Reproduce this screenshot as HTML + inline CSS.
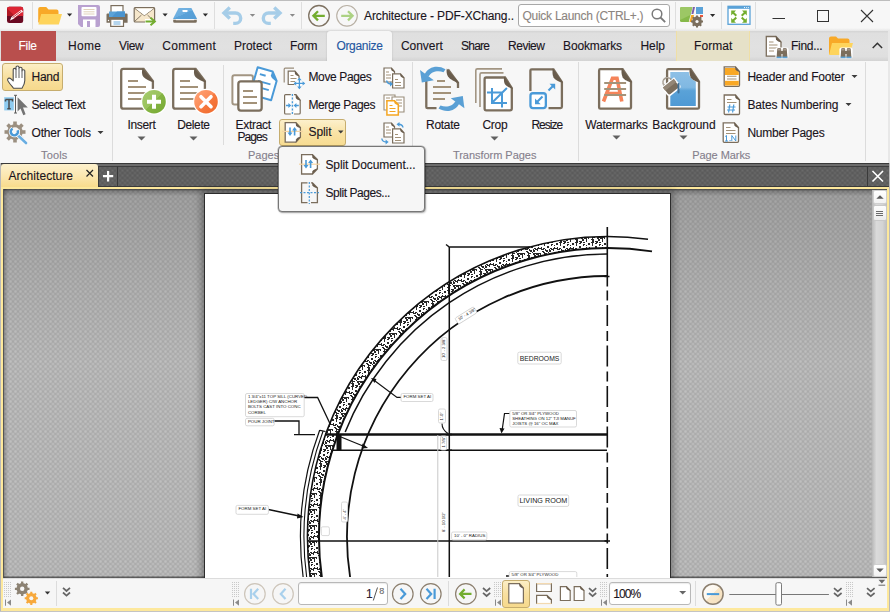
<!DOCTYPE html>
<html><head><meta charset="utf-8">
<style>
*{margin:0;padding:0;box-sizing:border-box}
html,body{width:890px;height:612px;overflow:hidden;background:#f7f7f7;font-family:"Liberation Sans",sans-serif;color:#1a1420}
.a{position:absolute}
.t{position:absolute;white-space:nowrap;-webkit-text-stroke:0.12px currentColor}
svg.L{position:absolute;left:0;top:0;width:890px;height:612px;overflow:visible}
.tex{background-color:#a5a5a5;background-image:radial-gradient(circle at 50% 50%,#bfbfbf 0,#bdbdbd 0.8px,rgba(189,189,189,0) 2.3px),radial-gradient(circle at 50% 50%,#bfbfbf 0,#bdbdbd 0.8px,rgba(189,189,189,0) 2.3px);background-size:5px 5px;background-position:0 0,2.5px 2.5px}
.texd{background-color:#5a5a5a;background-image:radial-gradient(circle at 50% 50%,#6a6a6a 0,rgba(106,106,106,0) 2.2px),radial-gradient(circle at 50% 50%,#6a6a6a 0,rgba(106,106,106,0) 2.2px);background-size:5px 5px;background-position:0 0,2.5px 2.5px}
</style></head><body>
<div class="a" style="left:0;top:0;width:890px;height:31px;background:#f7f7f7;border-top:1px solid #bdbdbd"></div>
<div class="a" style="left:0;top:28px;width:890px;height:3px;background:linear-gradient(#f7f7f7,#e6e6e6)"></div>
<div class="a" style="left:0;top:31px;width:890px;height:30px;background:linear-gradient(#d4d4d4,#dfdfdf 8%,#e1e1e1 50%,#dfdfdf 85%,#d3d3d3)"></div>
<div class="a" style="left:1px;top:31px;width:55px;height:30px;background:#b94f4d"></div>
<div class="a" style="left:327px;top:31px;width:65px;height:31px;background:#f6f6f6;border-radius:3px 3px 0 0;box-shadow:0 0 2px rgba(0,0,0,.18)"></div>
<div class="a" style="left:676px;top:31px;width:74px;height:30px;background:#e6e1c8;border-left:1px solid #efdfa6;border-right:1px solid #efdfa6"></div>
<div class="a" style="left:0;top:61px;width:890px;height:102px;background:#f7f7f7"></div>
<div class="a" style="left:112px;top:62px;width:1px;height:99px;background:#dcdcdc"></div>
<div class="a" style="left:223px;top:65px;width:1px;height:80px;background:#dcdcdc"></div>
<div class="a" style="left:412px;top:62px;width:1px;height:99px;background:#dcdcdc"></div>
<div class="a" style="left:578px;top:62px;width:1px;height:99px;background:#dcdcdc"></div>
<div class="a" style="left:865px;top:62px;width:1px;height:99px;background:#dcdcdc"></div>
<div class="a" style="left:888px;top:31px;width:2px;height:132px;background:#e8e8e8"></div>
<div class="a" style="left:2px;top:63px;width:61px;height:28px;border:1px solid #c6ad6e;border-radius:3px;background:linear-gradient(#fcefc6,#f8e0a0 50%,#f6d98c)"></div>
<div class="a" style="left:279px;top:119px;width:67px;height:27px;border:1px solid #c6ad6e;border-radius:3px;background:linear-gradient(#fcf0cc,#f9e3a6 50%,#f7dc92)"></div>
<!-- tab bar -->
<div class="a texd" style="left:0;top:163px;width:890px;height:24px"></div>
<div class="a" style="left:0;top:163px;width:890px;height:1px;background:#3a3a3a"></div>
<div class="a" style="left:0;top:164px;width:890px;height:2px;background:#6c6c6c"></div>
<div class="a" style="left:0;top:166px;width:890px;height:1px;background:#3e3e3e"></div>
<div class="a" style="left:98px;top:166px;width:1px;height:20px;background:#3a3a3a"></div>
<div class="a" style="left:117px;top:166px;width:1px;height:20px;background:#3a3a3a"></div>
<div class="a" style="left:867px;top:166px;width:1px;height:20px;background:#3a3a3a"></div>
<div class="a" style="left:0;top:186px;width:890px;height:1px;background:#3a3a3a"></div>
<div class="a" style="left:1px;top:164px;width:97px;height:23px;border-radius:3px 3px 0 0;background:linear-gradient(#fdf1cd,#fbe6ae 55%,#f9dc8c)"></div>
<!-- frame -->
<div class="a" style="left:0;top:187px;width:890px;height:425px;background:#fde89c"></div>
<div class="a" style="left:0;top:163px;width:1px;height:449px;background:#b9b9b9"></div>
<div class="a" style="left:889px;top:163px;width:1px;height:449px;background:#b9b9b9"></div>
<div class="a" style="left:0;top:611px;width:890px;height:1px;background:#c4c4c4"></div>
<div class="a tex" style="left:3px;top:189px;width:884px;height:389px"></div>
<div class="a" style="left:3px;top:189px;width:884px;height:389px;background:linear-gradient(rgba(0,0,0,.15),rgba(0,0,0,.06) 25%,rgba(0,0,0,0) 45%)"></div><div class="a" style="left:3px;top:189px;width:884px;height:7px;background:linear-gradient(rgba(0,0,0,.55),rgba(0,0,0,.2) 30%,rgba(0,0,0,0))"></div><div class="a" style="left:3px;top:189px;width:5px;height:389px;background:linear-gradient(90deg,rgba(0,0,0,.3),rgba(0,0,0,0))"></div><div class="a" style="left:3px;top:576px;width:884px;height:2px;background:linear-gradient(rgba(0,0,0,.15),rgba(0,0,0,.6))"></div>
<div class="a" style="left:3px;top:189px;width:1px;height:389px;background:#555"></div>
<!-- page shadow + page -->
<div class="a" style="left:204px;top:193px;width:467px;height:390px;background:#fff;border:1px solid #2c2c2c;box-shadow:0 0 7px 3px rgba(0,0,0,.3)"></div>
<!-- scrollbar -->
<div class="a" style="left:872px;top:190px;width:15px;height:387px;background:linear-gradient(90deg,#b8b8b8,#dadada 30%,#d4d4d4 70%,#bdbdbd)"></div>
<div class="a" style="left:873px;top:190px;width:14px;height:14px;background:linear-gradient(#fff,#f2f2f2);border:1px solid #d0d0d0;border-radius:2px"></div>
<div class="a" style="left:873px;top:205px;width:14px;height:16px;background:linear-gradient(#fdfdfd,#ececec);border:1px solid #c8c8c8;border-radius:2px"></div>
<div class="a" style="left:873px;top:564px;width:14px;height:13px;background:linear-gradient(#fff,#f2f2f2);border:1px solid #d0d0d0;border-radius:2px"></div>
<!-- status bar -->
<div class="a" style="left:3px;top:578px;width:884px;height:30px;background:#f6f6f6;border-top:1px solid #dcdcdc"></div>
<div class="a" style="left:298px;top:582px;width:90px;height:23px;border:1px solid #b8b8b8;border-radius:3px;background:#fff;box-shadow:inset 0 1px 1px rgba(0,0,0,.08)"></div>
<div class="a" style="left:609px;top:582px;width:82px;height:23px;border:1px solid #b8b8b8;border-radius:3px;background:#fff;box-shadow:inset 0 1px 1px rgba(0,0,0,.08)"></div>
<div class="a" style="left:502px;top:580px;width:28px;height:28px;border:1px solid #c6ad6e;border-radius:3px;background:linear-gradient(#fcefc6,#f8e0a0 50%,#f6d98c)"></div>
<div class="a" style="left:56px;top:581px;width:1px;height:25px;background:#dcdcdc"></div>
<div class="a" style="left:448px;top:581px;width:1px;height:25px;background:#dcdcdc"></div>
<div class="a" style="left:695px;top:581px;width:1px;height:25px;background:#dcdcdc"></div>
<!-- quick launch -->
<div class="a" style="left:518px;top:4px;width:152px;height:23px;border:1px solid #a8a8a8;border-radius:3px;background:#fff"></div>
<div class="a" style="left:32px;top:2px;width:1px;height:27px;background:#dedede"></div>
<div class="a" style="left:214px;top:2px;width:1px;height:27px;background:#dedede"></div>
<div class="a" style="left:301px;top:2px;width:1px;height:27px;background:#dedede"></div>
<div class="a" style="left:675px;top:2px;width:1px;height:27px;background:#dedede"></div>
<div class="a" style="left:721px;top:2px;width:1px;height:27px;background:#dedede"></div>
<div class="a" style="left:755px;top:2px;width:1px;height:27px;background:#dedede"></div>
<svg class="L">
<defs>
<linearGradient id="gG" x1="0" y1="0" x2="1" y2="1"><stop offset="0" stop-color="#a6cc6e"/><stop offset=".5" stop-color="#9ac25c"/><stop offset=".5" stop-color="#86b544"/><stop offset="1" stop-color="#76a934"/></linearGradient>
<linearGradient id="gO" x1="0" y1="0" x2="1" y2="1"><stop offset="0" stop-color="#ffa477"/><stop offset=".5" stop-color="#fb8a56"/><stop offset=".5" stop-color="#f77a40"/><stop offset="1" stop-color="#ef6a2c"/></linearGradient>
<linearGradient id="gB" x1="0" y1="0" x2="0" y2="1"><stop offset="0" stop-color="#8dc0e6"/><stop offset=".45" stop-color="#80b8e2"/><stop offset=".55" stop-color="#5aa2d8"/><stop offset="1" stop-color="#4f9ad4"/></linearGradient>
</defs>
<g stroke-linecap="butt">
<!-- Insert -->
<path d="M123.4,68.9H143.6L152.9,81.2V106.5Q152.9,108.7 150.7,108.7H123.4Q121.2,108.7 121.2,106.5V71.1Q121.2,68.9 123.4,68.9Z" fill="#fff" stroke="#7b6e5d" stroke-width="2.3"/>
<path d="M142.6,68.2L154,82.2C150,81.5 146,79.5 143.5,77C141.6,75 141.6,71 142.6,68.2Z" fill="#695c4c"/>
<path d="M128,81H138M128,87H146M128,93H146M128,99H146" stroke="#a39279" stroke-width="1.9"/>
<circle cx="154" cy="101.7" r="13" fill="#fff"/>
<circle cx="154" cy="101.7" r="11.8" fill="url(#gG)"/>
<path d="M147,101.7H161M154,94.7V108.7" stroke="#fff" stroke-width="4"/>
<!-- Delete -->
<path d="M175.4,68.9H195.6L204.9,81.2V106.5Q204.9,108.7 202.7,108.7H175.4Q173.2,108.7 173.2,106.5V71.1Q173.2,68.9 175.4,68.9Z" fill="#fff" stroke="#7b6e5d" stroke-width="2.3"/>
<path d="M194.6,68.2L206,82.2C202,81.5 198,79.5 195.5,77C193.6,75 193.6,71 194.6,68.2Z" fill="#695c4c"/>
<path d="M180,81H190M180,87H198M180,93H198M180,99H198" stroke="#a39279" stroke-width="1.9"/>
<circle cx="206" cy="101.7" r="13" fill="#fff"/>
<circle cx="206" cy="101.7" r="11.8" fill="url(#gO)"/>
<path d="M201,96.7L211,106.7M211,96.7L201,106.7" stroke="#fff" stroke-width="3.6" stroke-linecap="round"/>
<!-- Extract Pages -->
<rect x="232.4" y="75.3" width="20.5" height="29.2" rx="2" fill="#fff" stroke="#a29582" stroke-width="2"/>
<g transform="translate(257,66) rotate(16)">
<path d="M1,1H16.5L23,9V29H1Z" fill="#fff" stroke="#4a9ad8" stroke-width="2" stroke-linejoin="round"/>
<path d="M16,0.5L23.5,9.5C20.5,9 17,7.5 16,5.5Z" fill="#4a9ad8"/>
<path d="M5,7H11M5,14H18M5,20H18" stroke="#4a9ad8" stroke-width="1.9"/>
</g>
<rect x="238.35" y="81.45" width="23.3" height="29.1" rx="2.5" fill="#fff" stroke="#7b6e5d" stroke-width="2.3"/>
<path d="M243,91H253M243,97H257M243,103H257" stroke="#a39279" stroke-width="1.9"/>
<!-- Move Pages -->
<path d="M284.2,82.5V69.2Q284.2,68.2 285.2,68.2H294" fill="none" stroke="#9a8d7b" stroke-width="1.2"/>
<path d="M288.2,71.2H295L299,76V84.5H288.2Z" fill="#fff" stroke="#7b6e5d" stroke-width="1.2"/>
<path d="M294.6,70.6L299.6,76.4C297.5,76 295.5,75 295,74Z" fill="#695c4c"/>
<path d="M290.5,75.5H293.5M290.5,78.5H296.5M290.5,81.5H295" stroke="#a39279" stroke-width="1.2"/>
<g stroke="#fff" stroke-width="3" fill="none"><path d="M294.4,83.4H304.4M299.4,78.4V88.4"/></g>
<g stroke="#4a9ad8" stroke-width="1.3" fill="none"><path d="M294.4,83.4H304.4M299.4,78.4V88.4"/></g>
<path d="M299.4,77.6L297.2,80.2H301.6ZM299.4,89.2L297.2,86.6H301.6ZM293.6,83.4L296.2,81.2V85.6ZM305.2,83.4L302.6,81.2V85.6Z" fill="#4a9ad8"/>
<!-- Merge Pages -->
<path d="M290.8,94.6H285.6Q284.6,94.6 284.6,95.6V113Q284.6,114 285.6,114H290.8M294,94.6H296L300.2,100.2V113Q300.2,114 299.2,114H294" fill="#fff" stroke="#7b6e5d" stroke-width="1.2"/>
<path d="M295.4,94L301,100.8C298.5,100.3 296.5,99.3 295.8,98Z" fill="#695c4c"/>
<path d="M292.4,94V115" stroke="#4a9ad8" stroke-width="1.3" stroke-dasharray="2,1.6"/>
<path d="M286,105.5H289.5M298.8,105.5H295.3" stroke="#4a9ad8" stroke-width="1.3"/>
<path d="M291.2,105.5L288.4,103V108ZM293.6,105.5L296.4,103V108Z" fill="#4a9ad8"/>
<!-- Split (button) -->
<path d="M285.2,122.6H296L300.4,127.6V137.2L296,142.2H285.2Z" fill="#fff" stroke="#7b6e5d" stroke-width="1.3"/>
<path d="M295.6,122L301,128.2C298.8,127.8 296.6,126.6 296,125.4Z" fill="#695c4c"/>
<path d="M295.6,142.8L301,136.6C298.8,137 296.6,138.2 296,139.4Z" fill="#695c4c"/>
<path d="M282,131.4H303" stroke="#f4d4a4" stroke-width="1.2"/>
<path d="M290,127.5V133.5M294.6,129.5V135.5" stroke="#4a9ad8" stroke-width="1.6"/>
<path d="M290,136L287.5,132.6H292.5ZM294.6,127L292.1,130.4H297.1Z" fill="#4a9ad8"/>
<!-- right column 1 -->
<path d="M384,68H391.5L394.5,71.5V82H384Z" fill="#fff" stroke="#7b6e5d" stroke-width="1.2"/>
<path d="M391,67.5L395,72C393.5,71.8 391.8,71 391.3,70Z" fill="#695c4c"/>
<path d="M386,72H389M386,75H391M386,78H391" stroke="#a39279" stroke-width="1.1"/>
<path d="M392.6,73.8H400.5L404,77.8V88H392.6Z" fill="#fff" stroke="#7b6e5d" stroke-width="1.2"/>
<path d="M400,73.2L404.6,78.3C402.8,78 401,77 400.4,76Z" fill="#695c4c"/>
<path d="M395,79.5H398M395,82.5H401M395,85.5H401" stroke="#a39279" stroke-width="1.1"/>
<path d="M386.5,80.5Q387.5,84 391,84" fill="none" stroke="#4a9ad8" stroke-width="1.4"/>
<path d="M393,84L390,81.6V86.4Z" fill="#4a9ad8"/>
<!-- right column 2 -->
<path d="M384,95H395V110H384Z" fill="#fff" stroke="#9a8d7b" stroke-width="1.1"/>
<path d="M386,98H390M386,101H393" stroke="#a39279" stroke-width="1"/>
<path d="M392,97H404V112H392Z" fill="#fff" stroke="#9a8d7b" stroke-width="1.1"/>
<path d="M396,100H402M396,103H402M396,106H402" stroke="#a39279" stroke-width="1"/>
<path d="M386.9,100.7H394.5L398.3,104.5V114.9H386.9Z" fill="#fff" stroke="#f5a623" stroke-width="1.5"/>
<path d="M394,100.2L399,105.2C397,105 395,104 394.4,103Z" fill="#f5a623"/>
<path d="M389.5,105.5H392.5M389.5,108.5H395.5M389.5,111.5H395.5" stroke="#f5a623" stroke-width="1.2"/>
<!-- right column 3 -->
<path d="M384,123H391.5L394.5,126.5V137H384Z" fill="#fff" stroke="#7b6e5d" stroke-width="1.2"/>
<path d="M391,122.5L395,127C393.5,126.8 391.8,126 391.3,125Z" fill="#695c4c"/>
<path d="M386,127H389M386,130H391M386,133H391" stroke="#a39279" stroke-width="1.1"/>
<path d="M392.6,128.8H400.5L404,132.8V143H392.6Z" fill="#fff" stroke="#7b6e5d" stroke-width="1.2"/>
<path d="M400,128.2L404.6,133.3C402.8,133 401,132 400.4,131Z" fill="#695c4c"/>
<path d="M395,134.5H398M395,137.5H401M395,140.5H401" stroke="#a39279" stroke-width="1.1"/>
<path d="M403,127.5Q402.5,124.3 398.5,124.3" fill="none" stroke="#4a9ad8" stroke-width="1.4"/>
<path d="M396.5,124.3L399.5,121.9V126.7Z" fill="#4a9ad8"/>
<path d="M381.8,138.5Q382.2,142 386.5,142" fill="none" stroke="#4a9ad8" stroke-width="1.4"/>
<path d="M388.6,142L385.6,139.6V144.4Z" fill="#4a9ad8"/>
<!-- Rotate -->
<path d="M426.3,80V107Q426.3,108.2 427.5,108.2H436.5M458,88V83L448,69.5" fill="none" stroke="#7b6e5d" stroke-width="2.3"/>
<path d="M446.8,68.4L459.2,82.8C455,82 450,79.5 448,76.5C446.5,74 446.3,71 446.8,68.4Z" fill="#695c4c"/>
<path d="M437,81H445M433,87H451M433,93H451M433,99H445" stroke="#a39279" stroke-width="1.9"/>
<path d="M445.5,69.2C438,64.8 428.5,66.2 424.5,74.5L428.8,76.5C431,71.5 438,70 443.5,72.2Z" fill="#5aa0d5"/>
<path d="M420,70L421.8,82.4L433.8,80.2Z" fill="#5aa0d5"/>
<path d="M438.5,108.6C446,113 455.5,111.6 459.5,103.3L455.2,101.3C453,106.3 446,107.8 440.5,105.6Z" fill="#5aa0d5"/>
<path d="M464.4,108.3L462.8,96L450.8,98.2Z" fill="#5aa0d5"/>
<!-- Crop -->
<path d="M475.8,103V70.5Q475.8,68.9 477.4,68.9H502" fill="none" stroke="#a29582" stroke-width="1.6"/>
<path d="M480,107V74.5Q480,72.9 481.6,72.9H503.5" fill="none" stroke="#a29582" stroke-width="1.6"/>
<path d="M486.2,77.5H505L511.8,88V108.6Q511.8,110.3 510,110.3H486.2Q484.6,110.3 484.6,108.6V79.2Q484.6,77.5 486.2,77.5Z" fill="#fff" stroke="#7b6e5d" stroke-width="2.3"/>
<path d="M504.2,76.6L513,89C509.5,88 506,86 504.8,84C503.8,82 503.7,79 504.2,76.6Z" fill="#695c4c"/>
<path d="M492,88V103H507M487,92.6H502V107.5M492,102.7L506.9,88" fill="none" stroke="#4a9ad8" stroke-width="2"/>
<!-- Resize -->
<path d="M530.4,91V70.6Q530.4,69.3 531.7,69.3H553.5L561.9,82V106.8Q561.9,108.1 560.6,108.1H548.5" fill="none" stroke="#7b6e5d" stroke-width="2.3"/>
<path d="M552.8,68.3L563,82.8C559,82 555,80 553.5,77.5C552.3,75 552.3,71 552.8,68.3Z" fill="#695c4c"/>
<rect x="530.45" y="93.25" width="15.4" height="14.8" rx="2.5" fill="#fff" stroke="#4a9ad8" stroke-width="2.3"/>
<path d="M542.5,96.5L537,102" stroke="#4a9ad8" stroke-width="2.2"/>
<path d="M535,104.2V98.5L540.7,104.2Z" fill="#4a9ad8"/>
<path d="M548.5,90.5L553,86" stroke="#4a9ad8" stroke-width="2.2"/>
<path d="M555.2,83.8V89.5L549.5,83.8Z" fill="#4a9ad8"/>
<!-- Watermarks -->
<path d="M600.4,69.2H622.6L631,81.7V107.4Q631,108.7 629.7,108.7H600.4Q599.1,108.7 599.1,107.4V70.5Q599.1,69.2 600.4,69.2Z" fill="#fff" stroke="#7b6e5d" stroke-width="2.3"/>
<path d="M621.8,68.3L632.2,82.6C628,81.8 624,79.8 622.6,77.2C621.3,74.7 621.3,71 621.8,68.3Z" fill="#695c4c"/>
<path d="M603.5,101.5L612.5,78.2H617L621.8,101.5M607,93.5H619" fill="none" stroke="#f5845a" stroke-width="3.6"/>
<path d="M604.2,83H626.1M604.2,89H626.1M604.2,95H626.1" stroke="#a39279" stroke-width="1.9"/>
<!-- Background -->
<path d="M668.4,69.2H690.6L699,81.7V107.4Q699,108.7 697.7,108.7H668.4Q667.1,108.7 667.1,107.4V70.5Q667.1,69.2 668.4,69.2Z" fill="#fff" stroke="#7b6e5d" stroke-width="2.3"/>
<path d="M670.3,72.1H688.8C689,76 691.5,79.5 695.8,81.6V105.9H670.3Z" fill="url(#gB)"/>
<path d="M689.8,68.3L700.2,82.6C696,81.8 692,79.8 690.6,77.2C689.3,74.7 689.3,71 689.8,68.3Z" fill="#695c4c"/>
<g transform="translate(670.5,86) rotate(-38)">
<path d="M-7.5,-4H7.5V4.5Q7.5,7 5,7H-5Q-7.5,7 -7.5,4.5Z" fill="#7b6e5d" stroke="#fff" stroke-width="1.5"/>
<path d="M-7,-3.6H7V0.5H-7Z" fill="#938676"/>
<path d="M-4.5,-4.5C-4.5,-11 4.5,-11 4.5,-4.5" fill="none" stroke="#7b6e5d" stroke-width="1.4"/>
<path d="M-4.5,-4.5C-4.5,-11 4.5,-11 4.5,-4.5" fill="none" stroke="#fff" stroke-width="0.5"/>
</g>
<path d="M678.5,84V92.5" stroke="#3f6f95" stroke-width="2" stroke-linecap="round"/>
</g>
</svg>
<svg class="L">
<g stroke-linecap="butt">
<!-- carets (ribbon) -->
<path d="M137.5,136.5H145.5L141.5,140.5Z M189.5,136.5H197.5L193.5,140.5Z M490.5,136.5H498.5L494.5,140.5Z M612.5,135.5H620.5L616.5,139.5Z M679.5,135.5H687.5L683.5,139.5Z" fill="#606060"/>
<path d="M338,130.5H343.5L340.75,133.5Z M97.5,131H103.5L100.5,134Z M851.5,75H857.5L854.5,78Z M845.5,103H851.5L848.5,106Z" fill="#3c3c3c"/>
<!-- Header and Footer -->
<path d="M724.2,66.8H735.5L739.5,71.5V85.3Q739.5,86.3 738.5,86.3H725.2Q724.2,86.3 724.2,85.3Z" fill="#fff" stroke="#7b6e5d" stroke-width="1.3"/>
<path d="M725,68H735.2L738.8,72.2V75H725Z" fill="#f9a825"/>
<path d="M725,80.8H738.8V85.5H725Z" fill="#f9a825"/>
<path d="M735,66.2L740.2,72.2C738,71.8 736,70.8 735.4,69.6Z" fill="#695c4c"/>
<path d="M727,76.2H736.5M727,79H736.5" stroke="#a39279" stroke-width="1.1"/>
<!-- Bates -->
<path d="M724.2,95H735.5L739.5,99.7V113.5Q739.5,114.5 738.5,114.5H725.2Q724.2,114.5 724.2,113.5Z" fill="#fff" stroke="#7b6e5d" stroke-width="1.3"/>
<path d="M735,94.4L740.2,100.4C738,100 736,99 735.4,97.8Z" fill="#695c4c"/>
<path d="M727,99.5H731.5M727,102.5H736.5" stroke="#a39279" stroke-width="1.1"/>
<path d="M729.8,104.5L728.6,112.5M733.8,104.5L732.6,112.5M727.5,107H735.5M727,110H735" stroke="#4a9ad8" stroke-width="1.2"/>
<!-- Number Pages -->
<path d="M723.2,122.8H734.5L738.5,127.5V141.3Q738.5,142.3 737.5,142.3H724.2Q723.2,142.3 723.2,141.3Z" fill="#fff" stroke="#7b6e5d" stroke-width="1.3"/>
<path d="M734,122.2L739.2,128.2C737,127.8 735,126.8 734.4,125.6Z" fill="#695c4c"/>
<path d="M726,127.5H730.5M726,130.5H735.5M726,133.5H735.5" stroke="#a39279" stroke-width="1.1"/>
<path d="M725.2,136.5L726.5,135.5V141M725,141H728M729.5,140.5H730.6M731.8,141V135.5L735.8,141V135.5" fill="none" stroke="#4a9ad8" stroke-width="1"/>
<!-- Hand -->
<path d="M12.3,86.6C10,84 7.5,81 7.6,79.6C7.8,78 9.6,77.6 11,78.8L13.2,80.8V69.5C13.2,68 16,68 16,69.5V67.3C16,65.6 19,65.6 19,67.3V68.3C19,66.8 22,66.8 22,68.3V70.8C22,69.3 24.8,69.3 24.8,70.8V80.5C24.8,84 23.5,86 22,88.3H13.5Z" fill="#fff" stroke="#4d4d4d" stroke-width="1.1" stroke-linejoin="round"/>
<path d="M16,69.5V78M19,68.3V78M22,70.8V78" stroke="#4d4d4d" stroke-width="0.9"/>
<!-- Select Text -->
<rect x="4.2" y="97.2" width="9.6" height="13.2" fill="#8ecbf0"/>
<path d="M5.5,99.5H12.5V101.5M5.5,101.5V99.5M9,99.5V108.8M7.3,108.8H10.7" fill="none" stroke="#4c4c4c" stroke-width="1.5"/>
<path d="M15.5,95.3V113M14,95.3H17M14,113H17" stroke="#5c5c5c" stroke-width="1"/>
<path d="M17.6,97.2V111.5L20.5,108.6L23.3,115.2L25.6,114.2L23,107.6H27.8Z" fill="#737373"/>
<!-- Other tools gear+wrench -->
<g transform="translate(15,132)">
<circle r="6.2" fill="none" stroke="#9b8f80" stroke-width="3"/>
<g fill="#9b8f80"><rect x="-1.8" y="-10.5" width="3.6" height="4"/><rect x="-1.8" y="6.5" width="3.6" height="4"/><rect x="-10.5" y="-1.8" width="4" height="3.6"/><rect x="6.5" y="-1.8" width="4" height="3.6"/>
<rect x="-1.8" y="-10.5" width="3.6" height="4" transform="rotate(45)"/><rect x="-1.8" y="6.5" width="3.6" height="4" transform="rotate(45)"/><rect x="-10.5" y="-1.8" width="4" height="3.6" transform="rotate(45)"/><rect x="6.5" y="-1.8" width="4" height="3.6" transform="rotate(45)"/></g>
</g>
<path d="M16.5,134L26,143" stroke="#fff" stroke-width="4"/>
<path d="M16.5,134L26,143" stroke="#6aaee2" stroke-width="2.6" stroke-linecap="round"/>
<path d="M12.6,128.6A3.6,3.6 0 1 0 17.6,130.2" fill="none" stroke="#fff" stroke-width="4"/>
<path d="M12.6,128.6A3.6,3.6 0 1 0 17.6,130.2" fill="none" stroke="#4a9ad8" stroke-width="2.5"/>
</g>
</svg>
<svg class="L">
<defs>
<linearGradient id="gScan" x1="0" y1="0" x2="1" y2="1"><stop offset="0" stop-color="#79b6e3"/><stop offset=".5" stop-color="#6aaddf"/><stop offset=".5" stop-color="#5aa2d8"/><stop offset="1" stop-color="#559dd5"/></linearGradient>
</defs>
<g stroke-linecap="butt">
<!-- app icon -->
<rect x="7" y="6.8" width="16.2" height="16.2" rx="2.2" fill="#6b0a22"/>
<path d="M9.2,6.8H21Q23.2,6.8 23.2,9V16H7V9Q7,6.8 9.2,6.8Z" fill="#dc2433"/>
<path d="M7,8.5L15,16H7Z" fill="#b01824"/>
<path d="M10,20.5L11.5,17L21.5,9.8L23,11.8L13.2,19Z" fill="#fff"/>
<path d="M12.5,17.5L21.2,11.3M14,18.5L22,12.7" stroke="#c41e2e" stroke-width="0.9"/>
<!-- folder -->
<path d="M38.2,9Q38.2,7 40.2,7H46.2L48.5,9.4H56.5Q58.5,9.4 58.5,11.4V22.5H38.2Z" fill="#f8a928"/>
<path d="M41.2,14H62L58.8,24.6H38.4Z" fill="#fed45c"/>
<path d="M67,13.5H72.2L69.6,16.6Z" fill="#2a2a2a"/>
<!-- save -->
<path d="M78,5H98Q100,5 100,7V25Q100,27 98,27H81L78,24Z" fill="#b9a1d0"/>
<rect x="81.5" y="7" width="15" height="9.2" rx="1" fill="#fff"/>
<path d="M83.5,9.5H94.5M83.5,11.8H94.5M83.5,14H94.5" stroke="#d9c7aa" stroke-width="0.8"/>
<rect x="83" y="19.5" width="12.5" height="7.5" fill="#fff"/>
<rect x="87" y="21" width="3" height="6" fill="#b9a1d0"/>
<!-- print -->
<rect x="111" y="5.6" width="12" height="7" fill="#fff" stroke="#7b6e5d" stroke-width="1.2"/>
<path d="M107.5,13.5Q106.5,13.5 106.5,14.5V22.8H110V19.5H124V22.8H127.6V14.5Q127.6,13.5 126.6,13.5Z" fill="#7b6e5d"/>
<path d="M109,11.5H125V17H109Z" fill="#5aa2d8"/>
<path d="M117,11.5H125V17H112Z" fill="#4a94cf"/>
<rect x="110.7" y="19.2" width="12.8" height="7.2" fill="#fff" stroke="#7b6e5d" stroke-width="1.2"/>
<path d="M113.5,22H120.5M113.5,24H120.5" stroke="#5aa2d8" stroke-width="0.9"/>
<circle cx="108.5" cy="20.5" r="0.7" fill="#fff"/>
<!-- mail -->
<rect x="134.2" y="7.6" width="20.4" height="14.4" rx="1" fill="#f6e7cb" stroke="#7b6e5d" stroke-width="1.2"/>
<path d="M134.5,8.2L144.4,15.6L154.3,8.2M134.5,21.5L141.5,15M154.3,21.5L147.5,15" fill="none" stroke="#7b6e5d" stroke-width="0.9"/>
<path d="M135.5,8.5H153.5L144.4,15.2Z" fill="#fff"/>
<path d="M145,21.5H152.5" stroke="#fff" stroke-width="5"/>
<path d="M145.5,21.5H153" stroke="#73ad2f" stroke-width="2"/>
<path d="M150.5,17.8L154.8,21.5L150.5,25.2" fill="none" stroke="#73ad2f" stroke-width="2"/>
<path d="M162.5,13.5H167.7L165.1,16.6Z" fill="#2a2a2a"/>
<!-- scanner -->
<path d="M178.6,8.1H191.4L197.1,18.9H172.9Z" fill="url(#gScan)"/>
<rect x="182.3" y="10" width="5.4" height="1.9" rx="0.8" fill="#fff"/>
<path d="M174.5,19.8V21.5H195.5V19.8" fill="none" stroke="#7b6e5d" stroke-width="2.6" stroke-linejoin="round"/>
<path d="M202.8,13.5H208L205.4,16.6Z" fill="#2a2a2a"/>
<!-- undo -->
<path d="M225,13H235.5A5.2,5.2 0 0 1 235.5,23.4H233.2" fill="none" stroke="#a6cde8" stroke-width="3.4"/>
<path d="M229.8,7.6L224,13L229.8,18.4" fill="none" stroke="#a6cde8" stroke-width="3.4"/>
<path d="M249.8,14H255.2L252.5,16.8Z" fill="#8a8a8a"/>
<!-- redo -->
<path d="M279,13H268.5A5.2,5.2 0 0 0 268.5,23.4H270.8" fill="none" stroke="#a6cde8" stroke-width="3.4"/>
<path d="M274.2,7.6L280,13L274.2,18.4" fill="none" stroke="#a6cde8" stroke-width="3.4"/>
<path d="M289.8,14H295L292.4,16.8Z" fill="#8a8a8a"/>
<!-- back/forward -->
<circle cx="319" cy="15.8" r="10.3" fill="#f7f7f7" stroke="#7e7262" stroke-width="1.3"/>
<path d="M313.5,15.8H324.8M318,11.2L313.4,15.8L318,20.4" fill="none" stroke="#73ad2f" stroke-width="2.3"/>
<circle cx="347" cy="15.8" r="10.3" fill="#f7f7f7" stroke="#b8b0a4" stroke-width="1.1"/>
<path d="M341.2,15.8H352.5M348,11.2L352.6,15.8L348,20.4" fill="none" stroke="#acd283" stroke-width="2.3"/>
<!-- search -->
<circle cx="657" cy="14" r="4.8" fill="none" stroke="#7a7a7a" stroke-width="1.5"/>
<path d="M660.5,17.5L665.2,22.2" stroke="#7a7a7a" stroke-width="1.8"/>
<!-- theme -->
<path d="M681.5,7H692.4L688.8,22H681.5Q680,22 680,20.5V8.5Q680,7 681.5,7Z" fill="#86b94a"/>
<path d="M681.5,7H692.4L690.5,15L680,20V8.5Q680,7 681.5,7Z" fill="#9cc765"/>
<path d="M693,7H695L693.4,14H691.4Z" fill="#7c5ea8"/>
<path d="M691.2,15H694L692.3,22H689.5Z" fill="#f5a623"/>
<rect x="696" y="7" width="7" height="7" fill="#5aa2d8"/>
<rect x="700" y="15" width="3" height="2" fill="#e8553a"/>
<g transform="translate(697,21.5)">
<circle r="5.2" fill="#f7f7f7"/><circle r="3.6" fill="none" stroke="#7b6e5d" stroke-width="2.6"/>
<path d="M0,-6V6M-6,0H6M-4.2,-4.2L4.2,4.2M4.2,-4.2L-4.2,4.2" stroke="#7b6e5d" stroke-width="2"/>
<circle r="1.6" fill="#f7f7f7"/>
</g>
<path d="M710,14H715.2L712.6,17Z" fill="#2a2a2a"/>
<!-- fullscreen -->
<rect x="728" y="6.3" width="22" height="18" fill="#fff" stroke="#5aa2d8" stroke-width="1.3"/>
<rect x="728" y="6.3" width="22" height="2.5" fill="#5aa2d8"/>
<path d="M744,7.5H745M746.2,7.5H747.2M748.2,7.5H749" stroke="#fff" stroke-width="0.9"/>
<g stroke="#73ad2f" stroke-width="2" fill="none">
<path d="M733,12.5L736.3,15.8M745,12.5L741.7,15.8M733,20.8L736.3,17.5M745,20.8L741.7,17.5"/>
</g>
<path d="M731.2,10.6H736L731.2,15.4ZM746.8,10.6H742L746.8,15.4ZM731.2,22.7H736L731.2,17.9ZM746.8,22.7H742L746.8,17.9Z" fill="#73ad2f"/>
<!-- window controls -->
<path d="M772.5,18.5H785" stroke="#333" stroke-width="1"/>
<rect x="817.5" y="10.5" width="11" height="11" fill="none" stroke="#333" stroke-width="1"/>
<path d="M861,10L873,22M873,10L861,22" stroke="#333" stroke-width="1.1"/>
<!-- find doc + binocular -->
<path d="M766.3,36.5H776L781,42V56.2H766.3Z" fill="#fff" stroke="#7b6e5d" stroke-width="1.3"/>
<path d="M775.5,35.8L781.8,42.6C779,42 777,41 776,39.5Z" fill="#695c4c"/>
<path d="M769,42H773.5M769,45H777.5M769,48H777.5M769,51H774" stroke="#a39279" stroke-width="1.1"/>
<g transform="translate(776,48)"><rect x="-0.6" y="-0.6" width="13.2" height="11" rx="2" fill="#fff"/>
<path d="M1.2,1.5Q1.2,0 2.5,0H4Q5.2,0 5.2,1.5L5.6,9.5H0.6Z" fill="#7b6e5d"/><path d="M6.8,1.5Q6.8,0 8,0H9.5Q10.8,0 10.8,1.5L11.4,9.5H6.4Z" fill="#7b6e5d"/>
<rect x="1.5" y="0.5" width="3" height="2" fill="#a3968a"/><rect x="7.3" y="0.5" width="3" height="2" fill="#a3968a"/>
<rect x="5" y="3" width="2" height="3" fill="#7b6e5d"/>
<rect x="0.6" y="8.6" width="5" height="1.6" fill="#5aa2d8"/><rect x="6.4" y="8.6" width="5" height="1.6" fill="#5aa2d8"/></g>
<!-- folder + binocular -->
<path d="M829,38.5Q829,36.5 831,36.5H836L838,38.5H847.5Q849.5,38.5 849.5,40.5V54H829Z" fill="#f8a928"/>
<path d="M832,43H853L849.5,55H829Z" fill="#fed45c"/>
<g transform="translate(840,48)"><rect x="-0.6" y="-0.6" width="13.2" height="11" rx="2" fill="#fff"/>
<path d="M1.2,1.5Q1.2,0 2.5,0H4Q5.2,0 5.2,1.5L5.6,9.5H0.6Z" fill="#7b6e5d"/><path d="M6.8,1.5Q6.8,0 8,0H9.5Q10.8,0 10.8,1.5L11.4,9.5H6.4Z" fill="#7b6e5d"/>
<rect x="1.5" y="0.5" width="3" height="2" fill="#a3968a"/><rect x="7.3" y="0.5" width="3" height="2" fill="#a3968a"/>
<rect x="5" y="3" width="2" height="3" fill="#7b6e5d"/>
<rect x="0.6" y="8.6" width="5" height="1.6" fill="#5aa2d8"/><rect x="6.4" y="8.6" width="5" height="1.6" fill="#5aa2d8"/></g>
<path d="M872.7,48L877.4,43.3L882.1,48" fill="none" stroke="#333" stroke-width="1.5"/>
</g>
</svg>
<svg class="L">
<defs>
<pattern id="dots" width="2" height="2" patternUnits="userSpaceOnUse"><rect x="0" y="0" width="1" height="1" fill="#c9c9c9"/></pattern>
<linearGradient id="gZ" x1="0" y1="0" x2="1" y2="1"><stop offset="0" stop-color="#fff"/><stop offset=".5" stop-color="#fdf6ea"/><stop offset=".5" stop-color="#f8e6c8"/><stop offset="1" stop-color="#f5dfbb"/></linearGradient>
</defs>
<g stroke-linecap="butt">
<!-- tab close, plus -->
<path d="M86.5,170L93,176.5M93,170L86.5,176.5" stroke="#222" stroke-width="1.2"/>
<path d="M103,176.2H113.2M108.1,171V181.4" stroke="#fff" stroke-width="2.2"/>
<path d="M872.5,171L883,181.5M883,171L872.5,181.5" stroke="#fff" stroke-width="1.6"/>
<!-- scrollbar glyphs -->
<path d="M876.3,198.8H883.7L880,195.2Z" fill="#5a5a5a"/>
<path d="M876,211h7v1h-7zM876,213h7v1h-7zM876,215h7v1h-7z" fill="#6a6a6a"/>
<path d="M876.3,568.6H883.7L880,572.2Z" fill="#5a5a5a"/>
<!-- status grips -->
<rect x="4" y="581" width="8" height="16" fill="url(#dots)"/>
<rect x="232" y="581" width="8" height="16" fill="url(#dots)"/>
<rect x="494" y="581" width="8" height="16" fill="url(#dots)"/>
<rect x="600" y="581" width="8" height="16" fill="url(#dots)"/>
<rect x="845" y="581" width="8" height="16" fill="url(#dots)"/>
<g fill="#8a8a8a"><path d="M5,599.5H6V605.8H5ZM11,599.5V605.8L7,602.6Z"/><path d="M233,599.5H234V605.8H233ZM239,599.5V605.8L235,602.6Z"/><path d="M495,599.5H496V605.8H495ZM501,599.5V605.8L497,602.6Z"/><path d="M601,599.5H602V605.8H601ZM607,599.5V605.8L603,602.6Z"/><path d="M846,599.5H847V605.8H846ZM852,599.5V605.8L848,602.6Z"/></g>
<!-- gears -->
<g transform="translate(22.2,588.8)">
<circle r="4.3" fill="none" stroke="#8c8273" stroke-width="2.8"/>
<path d="M0,-7.3V7.3M-7.3,0H7.3M-5.2,-5.2L5.2,5.2M5.2,-5.2L-5.2,5.2" stroke="#8c8273" stroke-width="2.3"/>
<circle r="2.2" fill="#f6f6f6"/>
</g>
<g transform="translate(31.3,598.3)">
<circle r="6.8" fill="#f6f6f6"/>
<circle r="4" fill="none" stroke="#f7a83a" stroke-width="2.6"/>
<path d="M0,-6.6V6.6M-6.6,0H6.6M-4.7,-4.7L4.7,4.7M4.7,-4.7L-4.7,4.7" stroke="#f7a83a" stroke-width="2.1"/>
<circle r="2" fill="#f6f6f6"/>
</g>
<path d="M44.8,591.5H50.2L47.5,594.5Z" fill="#333"/>
<!-- chevrons -->
<g fill="none" stroke="#666" stroke-width="1.7">
<path d="M63,587.8L66.5,591L70,587.8M63,592.5L66.5,595.7L70,592.5"/>
<path d="M483,588L486.6,591.2L490.2,588M483,592.8L486.6,596L490.2,592.8"/>
<path d="M589,588.2L592.6,591.4L596.2,588.2M589,593L592.6,596.2L596.2,593"/>
<path d="M834,588.2L837.8,591.4L841.6,588.2M834,593L837.8,596.2L841.6,593"/>
<path d="M867,588.2L870.8,591.4L874.6,588.2M867,593L870.8,596.2L874.6,593"/>
</g>
<path d="M878.5,579.8H885.2L881.85,583.5Z" fill="#666"/><path d="M878.5,585.2H885.2" stroke="#666" stroke-width="1"/>
<!-- nav circles -->
<circle cx="254.9" cy="593.9" r="10.3" fill="none" stroke="#cdc5ba" stroke-width="1.2"/>
<path d="M251,588.8V599M258.2,588.8L253.5,593.9L258.2,599" fill="none" stroke="#a9d0ec" stroke-width="2.2"/>
<circle cx="283" cy="593.9" r="10.3" fill="none" stroke="#cdc5ba" stroke-width="1.2"/>
<path d="M285.5,588.8L280.8,593.9L285.5,599" fill="none" stroke="#a9d0ec" stroke-width="2.2"/>
<circle cx="402.8" cy="593.9" r="10.3" fill="none" stroke="#8c7f6e" stroke-width="1.2"/>
<path d="M400.5,588.8L405.2,593.9L400.5,599" fill="none" stroke="#4a9ad8" stroke-width="2.2"/>
<circle cx="430.8" cy="593.9" r="10.3" fill="none" stroke="#8c7f6e" stroke-width="1.2"/>
<path d="M426.5,588.8L431.2,593.9L426.5,599M434.6,588.8V599" fill="none" stroke="#4a9ad8" stroke-width="2.2"/>
<circle cx="465.9" cy="593.9" r="10.3" fill="none" stroke="#8c7f6e" stroke-width="1.2"/>
<path d="M460.2,593.9H471.5M464.6,589.4L460.1,593.9L464.6,598.4" fill="none" stroke="#73ad2f" stroke-width="2.2"/>
<!-- page number slash / 8 -->
<path d="M377.5,587.5L373.3,600.5" stroke="#555" stroke-width="1"/>
<!-- page view icons -->
<path d="M508.8,583.6H519.5L523.4,588V603H508.8Z" fill="#fff" stroke="#7b6e5d" stroke-width="1.2"/>
<path d="M519,583L524,588.8C521.8,588.3 519.8,587 519.4,586Z" fill="#695c4c"/>
<path d="M536.6,583.6H551.4V591.5H536.6Z" fill="#fff" stroke="#7b6e5d" stroke-width="1.2"/>
<path d="M536.6,583.6H551.4" stroke="#f3d9b0" stroke-width="1.2"/>
<path d="M536.6,595.4H547L551.4,599.5V603.5H536.6Z" fill="#fff" stroke="#7b6e5d" stroke-width="1.2"/>
<path d="M536.6,603.5H551.4" stroke="#f3d9b0" stroke-width="1.2"/>
<path d="M546.5,594.8L552,600.2C549.5,599.8 547.5,598.4 547,597.3Z" fill="#695c4c"/>
<path d="M560.4,586.6H566.5L570.2,590.5V600.5H560.4Z" fill="#fff" stroke="#7b6e5d" stroke-width="1.2"/>
<path d="M566,586L570.8,591C568.8,590.6 566.8,589.6 566.4,588.5Z" fill="#695c4c"/>
<path d="M574.2,586.6H580.3L584,590.5V600.5H574.2Z" fill="#fff" stroke="#7b6e5d" stroke-width="1.2"/>
<path d="M579.8,586L584.6,591C582.6,590.6 580.6,589.6 580.2,588.5Z" fill="#695c4c"/>
<!-- zoom caret -->
<path d="M679.2,591H686.2L682.7,594.6Z" fill="#666"/>
<!-- zoom out -->
<circle cx="712.9" cy="594.1" r="10.2" fill="url(#gZ)" stroke="#8c7f6e" stroke-width="1.5"/>
<path d="M706.8,594.1H719.2" stroke="#4a9ad8" stroke-width="2"/>
<!-- slider -->
<path d="M729.3,594.5H828.9" stroke="#777" stroke-width="1.1"/>
<rect x="775.9" y="582.7" width="5.6" height="22.4" rx="1.5" fill="#fff" stroke="#7a7a7a" stroke-width="1"/>
</g>
</svg>
<svg class="L">
<defs><clipPath id="pg"><rect x="205" y="194" width="465" height="383"/></clipPath>
<pattern id="stip" width="16" height="16" patternUnits="userSpaceOnUse"><rect width="16" height="16" fill="#fff"/><path d="M0,0h1v1h-1zM1,0h1v1h-1zM6,0h1v1h-1zM7,0h1v1h-1zM10,0h1v1h-1zM0,1h1v1h-1zM1,1h1v1h-1zM3,1h1v1h-1zM4,1h1v1h-1zM5,1h1v1h-1zM10,1h1v1h-1zM0,2h1v1h-1zM1,2h1v1h-1zM4,2h1v1h-1zM5,2h1v1h-1zM7,2h1v1h-1zM8,2h1v1h-1zM15,2h1v1h-1zM0,3h1v1h-1zM3,3h1v1h-1zM4,3h1v1h-1zM12,3h1v1h-1zM13,3h1v1h-1zM0,4h1v1h-1zM7,4h1v1h-1zM8,4h1v1h-1zM12,4h1v1h-1zM13,4h1v1h-1zM0,5h1v1h-1zM7,5h1v1h-1zM10,5h1v1h-1zM3,6h1v1h-1zM4,6h1v1h-1zM3,7h1v1h-1zM4,7h1v1h-1zM10,7h1v1h-1zM13,7h1v1h-1zM0,8h1v1h-1zM6,8h1v1h-1zM7,8h1v1h-1zM9,8h1v1h-1zM10,8h1v1h-1zM11,8h1v1h-1zM12,8h1v1h-1zM13,8h1v1h-1zM15,8h1v1h-1zM1,9h1v1h-1zM5,9h1v1h-1zM7,9h1v1h-1zM8,9h1v1h-1zM9,9h1v1h-1zM13,9h1v1h-1zM14,9h1v1h-1zM15,9h1v1h-1zM1,10h1v1h-1zM2,10h1v1h-1zM3,10h1v1h-1zM5,10h1v1h-1zM6,10h1v1h-1zM9,10h1v1h-1zM2,11h1v1h-1zM3,11h1v1h-1zM5,11h1v1h-1zM6,11h1v1h-1zM14,11h1v1h-1zM15,11h1v1h-1zM0,12h1v1h-1zM4,12h1v1h-1zM15,12h1v1h-1zM0,13h1v1h-1zM1,13h1v1h-1zM2,13h1v1h-1zM5,13h1v1h-1zM6,13h1v1h-1zM7,13h1v1h-1zM8,13h1v1h-1zM9,13h1v1h-1zM10,13h1v1h-1zM11,13h1v1h-1zM12,13h1v1h-1zM0,14h1v1h-1zM5,14h1v1h-1zM6,14h1v1h-1zM8,14h1v1h-1zM9,14h1v1h-1zM10,14h1v1h-1zM12,14h1v1h-1zM0,15h1v1h-1zM1,15h1v1h-1zM6,15h1v1h-1zM7,15h1v1h-1zM10,15h1v1h-1zM15,15h1v1h-1z" fill="#111"/></pattern></defs>
<g clip-path="url(#pg)" fill="none" stroke="#111">
<path d="M607.00,236.50A300.5,300.5 0 0 0 310.59,580.00L322.22,580.00A289,289 0 0 1 607.00,248.00Z" fill="url(#stip)" stroke="none" opacity="0.9"/>
<path d="M648.00,239.17A300.5,300.5 0 0 0 310.59,580.00" stroke-width="1.6"/>
<path d="M652.00,251.37A289,289 0 0 0 322.22,580.00" stroke-width="2"/>
<path d="M607.00,254.00A283,283 0 0 0 345.20,432.00" stroke-width="1.5"/>
<path d="M607.00,276.00A261,261 0 0 0 350.57,580.00" stroke-width="1.8"/>
<path d="M323.08,431.00A304,304 0 0 0 307.06,580.00" stroke-width="1.1"/>
<path d="M319.72,430.00A307.5,307.5 0 0 0 303.52,580.00" stroke-width="1.2"/>
<path d="M320,430.3L325.5,431.5" stroke-width="1.2"/>
<path d="M607.3,227V286.5" stroke-width="1.6"/>
<path d="M607.3,290.5V580" stroke-width="1.6" stroke-dasharray="10,4.5,21,5"/>
<path d="M449.3,247V580" stroke-width="1.5"/>
<path d="M449.3,247H530" stroke-width="1.5"/>
<path d="M446,244.5L449.3,247" stroke-width="1.5"/>
<path d="M325,434.5H607" stroke-width="2.6"/>
<path d="M331,450.3H607" stroke-width="1.5"/>
<path d="M307,541H607" stroke-width="1.5"/>
<path d="M437.8,435V580" stroke="#c8c8c8" stroke-width="1"/>
<path d="M604.5,276.6H609.5M446.5,434.5H452M446.5,450.3H452M604.5,541H610" stroke-width="1.5"/>
<rect x="336.5" y="434" width="5" height="16" fill="#111" stroke="none"/>
<path d="M341,437L365.5,447" stroke-width="1.3"/><path d="M368,448L362.5,443.5L361.5,448.5Z" fill="#111" stroke="none"/>
<path d="M304,397.5H317.6L330.4,424.5" stroke-width="1.3"/>
<path d="M274,421H299V434.6M294,434.6H315" stroke-width="1.3"/>
<path d="M401,397.4H397L373,379.5" stroke-width="1.2"/><path d="M371,378L376.5,379L374.5,383Z" fill="#111" stroke="none"/>
<path d="M268.4,509.5L301.5,516.5" stroke-width="1.3"/><path d="M303.5,517L297.5,513.5L297,518.5Z" fill="#111" stroke="none"/>
<path d="M509.8,413.5H504.5L502,431" stroke-width="1.2"/><path d="M501.5,433.5L499.5,428L504.5,428.5Z" fill="#111" stroke="none"/>
<path d="M442,423.5C442,428 444,431 448,433.5" stroke-width="1.1"/>
<path d="M509,576H506" stroke-width="1.5"/>
<path d="M329,531L322,533" stroke-width="1.1"/>
</g>
<g clip-path="url(#pg)">
<rect x="517.8" y="352.2" width="43.40000000000009" height="11.800000000000011" rx="1.5" fill="#fff" stroke="#cfcfcf" stroke-width="0.8"/><text x="539.5" y="360.8" font-family="Liberation Sans" font-size="6.8" fill="#1a1a1a" text-anchor="middle">BEDROOMS</text>
<rect x="518" y="495" width="50.700000000000045" height="11.399999999999977" rx="1.5" fill="#fff" stroke="#cfcfcf" stroke-width="0.8"/><text x="543.35" y="503.2" font-family="Liberation Sans" font-size="7.2" fill="#1a1a1a" text-anchor="middle">LIVING ROOM</text>
<rect x="245.5" y="393.5" width="58.69999999999999" height="23.19999999999999" rx="1.5" fill="#fff" stroke="#cfcfcf" stroke-width="0.8"/><text x="247.9" y="398.00" font-family="Liberation Sans" font-size="4.4" fill="#222">1 3/4"x11 TOP SILL (CURVED</text><text x="247.9" y="403.20" font-family="Liberation Sans" font-size="4.4" fill="#222">LEDGER) C/W ANCHOR</text><text x="247.9" y="408.40" font-family="Liberation Sans" font-size="4.4" fill="#222">BOLTS CAST INTO CONC</text><text x="247.9" y="413.60" font-family="Liberation Sans" font-size="4.4" fill="#222">CORBEL</text>
<rect x="245.5" y="418.4" width="28.69999999999999" height="7.400000000000034" rx="1.5" fill="#fff" stroke="#cfcfcf" stroke-width="0.8"/><text x="247.9" y="422.90" font-family="Liberation Sans" font-size="4.4" fill="#222">POUR JOINT</text>
<rect x="401" y="393.5" width="32" height="8.0" rx="1.5" fill="#fff" stroke="#cfcfcf" stroke-width="0.8"/><text x="403.4" y="398.00" font-family="Liberation Sans" font-size="4.4" fill="#222">FORM SET AI</text>
<rect x="509.8" y="410.5" width="66.69999999999999" height="16.5" rx="1.5" fill="#fff" stroke="#cfcfcf" stroke-width="0.8"/><text x="512.2" y="414.93" font-family="Liberation Sans" font-size="4.3" fill="#222">5/8" OR 3/4" PLYWOOD</text><text x="512.2" y="419.82" font-family="Liberation Sans" font-size="4.3" fill="#222">SHEATHING ON 12" TJI MANUF</text><text x="512.2" y="424.73" font-family="Liberation Sans" font-size="4.3" fill="#222">JOISTS @ 16" OC MAX</text>
<rect x="236" y="505.4" width="32.39999999999998" height="8.899999999999977" rx="1.5" fill="#fff" stroke="#cfcfcf" stroke-width="0.8"/><text x="238.4" y="509.90" font-family="Liberation Sans" font-size="4.4" fill="#222">FORM SET AI</text>
<rect x="451.6" y="532" width="35.19999999999999" height="8" rx="1.5" fill="#fff" stroke="#cfcfcf" stroke-width="0.8"/><text x="454.0" y="536.50" font-family="Liberation Sans" font-size="4.4" fill="#222">10' - 0" RADIUS</text>
<rect x="509.2" y="571.6" width="67.59999999999997" height="18.399999999999977" rx="1.5" fill="#fff" stroke="#cfcfcf" stroke-width="0.8"/><text x="511.59999999999997" y="576.03" font-family="Liberation Sans" font-size="4.3" fill="#222">5/8" OR 3/4" PLYWOOD</text>
<rect x="321.3" y="526.8" width="8.099999999999966" height="8.800000000000068" rx="1.5" fill="#fff" stroke="#cfcfcf" stroke-width="0.8"/>
<g transform="rotate(-90 444 349)"><rect x="432.5" y="346" width="23.0" height="6" rx="1.5" fill="#fff" stroke="#cfcfcf" stroke-width="0.8"/><text x="434.9" y="350.35" font-family="Liberation Sans" font-size="4.2" fill="#222">10' - 2 3/8"</text></g>
<g transform="rotate(-90 442 416)"><rect x="435" y="412.5" width="14" height="7.0" rx="1.5" fill="#fff" stroke="#cfcfcf" stroke-width="0.8"/><text x="437.4" y="416.85" font-family="Liberation Sans" font-size="4.2" fill="#222">1'-0"</text></g>
<g transform="rotate(-90 443.5 443)"><rect x="436.5" y="440" width="14.0" height="6" rx="1.5" fill="#fff" stroke="#cfcfcf" stroke-width="0.8"/><text x="438.9" y="444.35" font-family="Liberation Sans" font-size="4.2" fill="#222">1 7/8"</text></g>
<g transform="rotate(-90 344.5 512)"><rect x="334.5" y="509" width="20.0" height="6" rx="1.5" fill="#fff" stroke="#cfcfcf" stroke-width="0.8"/><text x="336.9" y="513.35" font-family="Liberation Sans" font-size="4.2" fill="#222">4' - 4"</text></g>
<g transform="rotate(-90 443 522)"><text x="433" y="524" font-family="Liberation Sans" font-size="4.2" fill="#222">8' - 10 1/2"</text></g>
<g transform="rotate(-32 466 315.5)"><rect x="455" y="312" width="22" height="7" rx="1.5" fill="#fff" stroke="#cfcfcf" stroke-width="0.8"/><text x="457.4" y="316.35" font-family="Liberation Sans" font-size="4.2" fill="#222">10' - 4 3/8"</text></g>
</g>
</svg><div class="t" style="left:364.00px;top:10px;font-size:12px;line-height:12px;letter-spacing:-0.106px;">Architecture - PDF-XChang..</div>
<div class="t" style="left:522.50px;top:10px;font-size:12px;line-height:12px;letter-spacing:-0.270px;color:#8c8580;">Quick Launch (CTRL+.)</div>
<div class="t" style="left:68.00px;top:40px;font-size:12px;line-height:12px;letter-spacing:0.333px;">Home</div>
<div class="t" style="left:119.00px;top:40px;font-size:12px;line-height:12px;letter-spacing:-0.350px;">View</div>
<div class="t" style="left:162.30px;top:40px;font-size:12px;line-height:12px;letter-spacing:0.250px;">Comment</div>
<div class="t" style="left:234.00px;top:40px;font-size:12px;line-height:12px;letter-spacing:-0.033px;">Protect</div>
<div class="t" style="left:290.00px;top:40px;font-size:12px;line-height:12px;letter-spacing:-0.167px;">Form</div>
<div class="t" style="left:401.00px;top:40px;font-size:12px;line-height:12px;letter-spacing:-0.050px;">Convert</div>
<div class="t" style="left:461.00px;top:40px;font-size:12px;line-height:12px;letter-spacing:-0.750px;">Share</div>
<div class="t" style="left:508.00px;top:40px;font-size:12px;line-height:12px;letter-spacing:-0.480px;">Review</div>
<div class="t" style="left:563.00px;top:40px;font-size:12px;line-height:12px;letter-spacing:-0.125px;">Bookmarks</div>
<div class="t" style="left:640.50px;top:40px;font-size:12px;line-height:12px;letter-spacing:-0.067px;">Help</div>
<div class="t" style="left:694.00px;top:40px;font-size:12px;line-height:12px;letter-spacing:0.080px;">Format</div>
<div class="t" style="left:791.00px;top:40px;font-size:12px;line-height:12px;letter-spacing:-0.275px;">Find...</div>
<div class="t" style="left:18.50px;top:40px;font-size:12px;line-height:12px;letter-spacing:-0.283px;color:#ffffff;">File</div>
<div class="t" style="left:336.40px;top:40px;font-size:12px;line-height:12px;letter-spacing:-0.300px;color:#2456a0;">Organize</div>
<div class="t" style="left:31.50px;top:71px;font-size:12px;line-height:12px;letter-spacing:-0.267px;">Hand</div>
<div class="t" style="left:31.50px;top:99px;font-size:12px;line-height:12px;letter-spacing:-0.440px;">Select Text</div>
<div class="t" style="left:31.50px;top:127px;font-size:12px;line-height:12px;letter-spacing:-0.175px;">Other Tools</div>
<div class="t" style="left:127.50px;top:119px;font-size:12px;line-height:12px;letter-spacing:-0.340px;">Insert</div>
<div class="t" style="left:177.30px;top:119px;font-size:12px;line-height:12px;letter-spacing:-0.400px;">Delete</div>
<div class="t" style="left:235.60px;top:119px;font-size:12px;line-height:12px;letter-spacing:-0.325px;">Extract</div>
<div class="t" style="left:237.40px;top:131px;font-size:12px;line-height:12px;letter-spacing:-0.912px;">Pages</div>
<div class="t" style="left:308.50px;top:71px;font-size:12px;line-height:12px;letter-spacing:-0.378px;">Move Pages</div>
<div class="t" style="left:308.50px;top:99px;font-size:12px;line-height:12px;letter-spacing:-0.430px;">Merge Pages</div>
<div class="t" style="left:308.50px;top:126px;font-size:12px;line-height:12px;letter-spacing:-0.088px;">Split</div>
<div class="t" style="left:426.00px;top:119px;font-size:12px;line-height:12px;letter-spacing:-0.270px;">Rotate</div>
<div class="t" style="left:482.40px;top:119px;font-size:12px;line-height:12px;letter-spacing:-0.233px;">Crop</div>
<div class="t" style="left:531.40px;top:119px;font-size:12px;line-height:12px;letter-spacing:-0.960px;">Resize</div>
<div class="t" style="left:585.20px;top:119px;font-size:12px;line-height:12px;letter-spacing:-0.183px;">Watermarks</div>
<div class="t" style="left:652.30px;top:119px;font-size:12px;line-height:12px;letter-spacing:-0.083px;">Background</div>
<div class="t" style="left:747.40px;top:71px;font-size:12px;line-height:12px;letter-spacing:-0.209px;">Header and Footer</div>
<div class="t" style="left:747.40px;top:99px;font-size:12px;line-height:12px;letter-spacing:-0.114px;">Bates Numbering</div>
<div class="t" style="left:747.40px;top:127px;font-size:12px;line-height:12px;letter-spacing:-0.250px;">Number Pages</div>
<div class="t" style="left:41.00px;top:150px;font-size:11px;line-height:11px;letter-spacing:0.150px;color:#857f8c;">Tools</div>
<div class="t" style="left:248.00px;top:150px;font-size:11px;line-height:11px;color:#857f8c;">Pages</div>
<div class="t" style="left:452.90px;top:150px;font-size:11px;line-height:11px;letter-spacing:-0.032px;color:#857f8c;">Transform Pages</div>
<div class="t" style="left:692.20px;top:150px;font-size:11px;line-height:11px;letter-spacing:-0.056px;color:#857f8c;">Page Marks</div>
<div class="t" style="left:8.50px;top:170px;font-size:12px;line-height:12px;letter-spacing:0.041px;">Architecture</div>
<div class="t" style="left:613.30px;top:588px;font-size:12px;line-height:12px;letter-spacing:-0.900px;">100%</div>
<div class="t" style="left:366.00px;top:588px;font-size:12px;line-height:12px;color:#2a2030;">1</div>
<div class="t" style="left:379.20px;top:587px;font-size:9px;line-height:9px;color:#6a6a6a;">8</div>
<div class="a" style="left:278px;top:146px;width:147px;height:66px;border:1px solid #777;border-radius:4px;background:#f6f6f6;box-shadow:0 0 0 0.6px rgba(0,0,0,.25),1px 1px 2px rgba(0,0,0,.3)"></div>
<svg class="L">
<path d="M301.6,154.6H312.5L317.4,159.6V169L312.5,174H301.6Z" fill="#fff" stroke="#7b6e5d" stroke-width="1.3"/>
<path d="M312,154L318,160.4C315.5,160 313,158.6 312.4,157.4Z" fill="#695c4c"/>
<path d="M312,174.6L318,168.2C315.5,168.6 313,170 312.4,171.2Z" fill="#695c4c"/>
<path d="M299,164.2H320" stroke="#f4d4a4" stroke-width="1.2"/>
<path d="M306,160V166M310.6,162V168" stroke="#4a9ad8" stroke-width="1.6"/>
<path d="M306,168.5L303.5,165.1H308.5ZM310.6,159.5L308.1,162.9H313.1Z" fill="#4a9ad8"/>
<path d="M307.5,182.8H301.6V202.6H307.5M311,182.8H312.5L317.4,187.8V202.6H311" fill="none" stroke="#7b6e5d" stroke-width="1.3"/>
<path d="M312,182.2L318,188.6C315.5,188.2 313,186.8 312.4,185.6Z" fill="#695c4c"/>
<path d="M309.3,182V204" stroke="#4a9ad8" stroke-width="1.2" stroke-dasharray="2,1.5"/>
<path d="M300,192.7H319" stroke="#4a9ad8" stroke-width="1.2" stroke-dasharray="2,1.5"/>
</svg>
<div class="t" style="left:325.40px;top:159px;font-size:12px;line-height:12px;letter-spacing:-0.075px;">Split Document...</div>
<div class="t" style="left:325.40px;top:187px;font-size:12px;line-height:12px;letter-spacing:-0.438px;">Split Pages...</div>

</body></html>
